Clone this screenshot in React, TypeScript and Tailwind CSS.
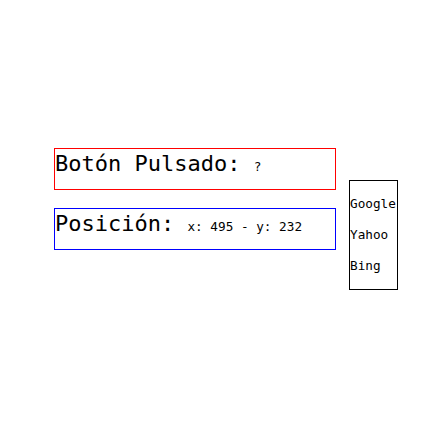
export default function App() {
  const menu = ["Google", "Yahoo", "Bing"];

  return (
    <div className="flex items-start bg-white min-h-[433px] pl-[54px] pt-[148px] text-black font-['DejaVu_Sans_Mono',monospace]">
      {/* status boxes */}
      <div className="flex flex-col gap-[18px] w-[282px]">
        <div className="h-[42px] border border-[#ff0000] pt-[2px] leading-[normal] whitespace-nowrap">
          <span className="text-[22px] leading-[normal]">Botón Pulsado: </span>
          <span className="text-[12.7px] leading-[normal]">?</span>
        </div>
        <div className="h-[42px] border border-[#0000ff] pt-[2px] leading-[normal] whitespace-nowrap">
          <span className="text-[22px] leading-[normal]">Posición: </span>
          <span className="text-[12.7px] leading-[normal]">x: 495 - y: 232</span>
        </div>
      </div>

      {/* search menu */}
      <div className="ml-[13px] mt-[32px] w-[49px] h-[110px] border border-black pt-[7px] text-[12.7px] overflow-hidden">
        {menu.map((m) => (
          <div key={m} className="h-[31px] leading-[31px] whitespace-nowrap">
            {m}
          </div>
        ))}
      </div>
    </div>
  );
}
